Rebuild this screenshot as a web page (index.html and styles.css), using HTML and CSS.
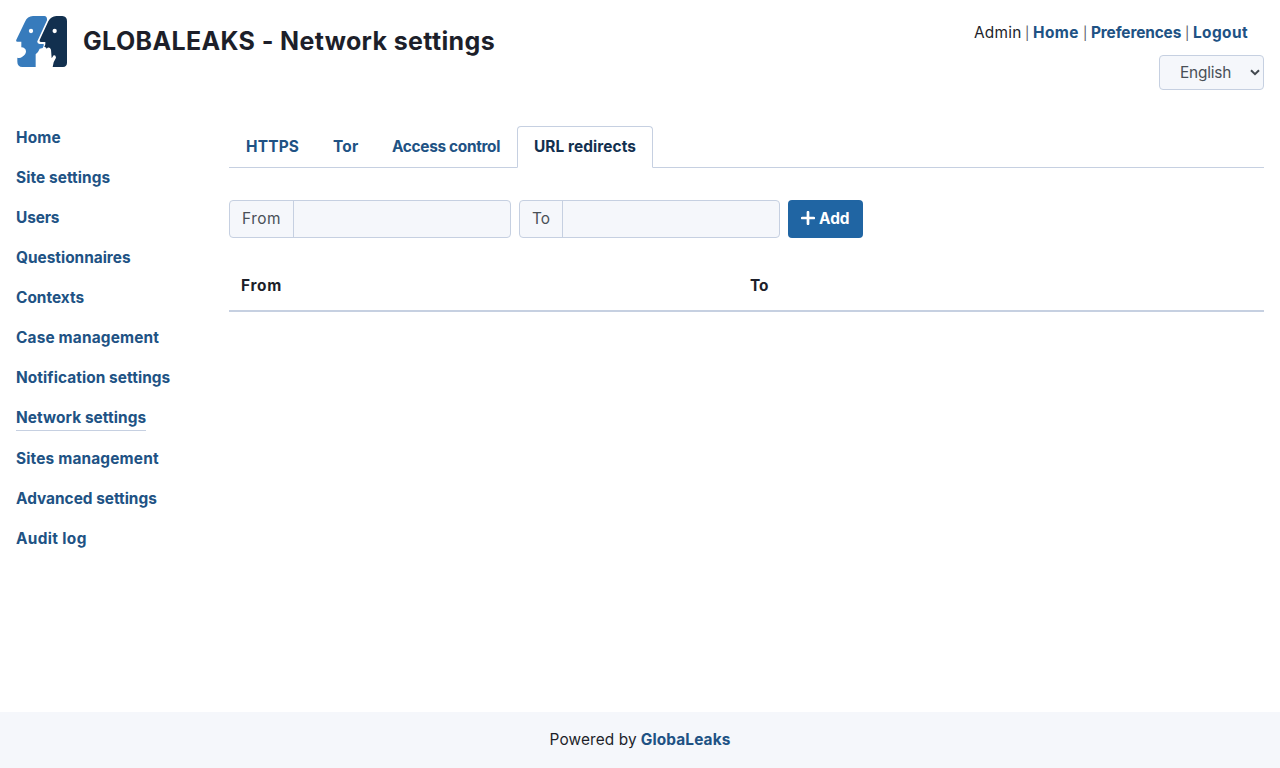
FILE: index.html
```html
<!DOCTYPE html>
<html lang="en">
<head>
<meta charset="utf-8">
<title>GLOBALEAKS - Network settings</title>
<link rel="stylesheet" href="styles.css">
</head>
<body>
<header class="header">
  <div class="brand">
    <svg class="logo" viewBox="24 24 153 153" aria-hidden="true">
      <path fill="#377bbc" d="M75 24H109Q118 25 117 37L88 100Q87 107 95 108H107V113L104 120L95 122L90 132L83 139V177H43Q28 176 28 161V149Q36 152 43 146Q54 140 54 130Q53 119 40 118V101H28Q23 101 25 95L51 41Q58 25 75 24Z"/>
      <path fill="#12304f" d="M145 24H163Q177 25 177 39V164Q177 176 165 177H134L137 163L144 149Q143 140 137 142L131 151L129 125Q126 117 119 119L116 122Q114 116 109 117L112 109V102H98Q93 101 95 96L121 40Q129 25 145 24Z"/>
      <circle cx="69" cy="69" r="6.5" fill="#fff"/>
      <circle cx="140" cy="69" r="6.5" fill="#fff"/>
    </svg>
    <h1 class="title">GLOBALEAKS - Network settings</h1>
  </div>
  <div class="account">
    <div class="user-links"><span class="u-name">Admin</span><i>|</i><a class="u-home">Home</a><i>|</i><a class="u-pref">Preferences</a><i>|</i><a class="u-out">Logout</a></div>
    <div class="language"><span>English</span><svg class="chevron" viewBox="0 0 10 7"><path d="M1 1.2L5 5.2L9 1.2"/></svg></div>
  </div>
</header>
<div class="layout">
  <nav class="sidebar">
    <a class="wide">Home</a>
    <a>Site settings</a>
    <a class="snug">Users</a>
    <a class="even">Questionnaires</a>
    <a class="even">Contexts</a>
    <a class="wide">Case management</a>
    <a>Notification settings</a>
    <a class="current">Network settings</a>
    <a class="wide">Sites management</a>
    <a class="even">Advanced settings</a>
    <a class="wider">Audit log</a>
  </nav>
  <main class="content">
    <div class="tabs">
      <a class="tab t-https">HTTPS</a>
      <a class="tab t-tor">Tor</a>
      <a class="tab t-access">Access control</a>
      <a class="tab active">URL redirects</a>
    </div>
    <form class="redirect-form">
      <label class="group from"><span>From</span><input type="text"></label>
      <label class="group to"><span>To</span><input type="text"></label>
      <button class="add" type="button"><svg class="plus" viewBox="0 0 14 14"><path d="M7 1.2V12.8M1.2 7H12.8"/></svg><span>Add</span></button>
    </form>
    <div class="table-head"><span>From</span><span>To</span></div>
  </main>
</div>
<footer class="footer"><span>Powered by</span><a>GlobaLeaks</a></footer>
</body>
</html>
```
FILE: styles.css
```css
* { box-sizing: border-box; }
body {
  margin: 0;
  height: 768px;
  display: flex;
  flex-direction: column;
  background: #fff;
  color: #1d1f2a;
  font: 400 15.4px/24px Inter, "Liberation Sans", sans-serif;
  white-space: nowrap;
}
a { color: #205284; font-weight: 700; }
.header { display: flex; justify-content: space-between; height: 126px; padding: 16px 16px 0; }
.brand { display: flex; gap: 16px; height: 51px; }
.logo { width: 51px; height: 51px; }
.title { margin: 0; font-size: 25px; line-height: 50px; font-weight: 650; letter-spacing: .36px; }
.account { display: flex; flex-direction: column; align-items: flex-end; }
.user-links { display: flex; height: 39px; padding: 5px 16px 0 0; }
.user-links i { width: 12px; padding-left: 4px; font-style: normal; font-size: 13px; color: #555763; }
.u-name { width: 47px; letter-spacing: .25px; }
.u-home { width: 46px; letter-spacing: .4px; }
.u-pref { width: 90px; letter-spacing: -.12px; }
.u-out { width: 55px; letter-spacing: .4px; }
.language {
  display: flex; align-items: center; justify-content: space-between;
  width: 105px; height: 35px; padding: 0 3px 0 20px;
  border: 1px solid #c6d0e1; border-radius: 4px;
  background: #f5f7fb; color: #495057; letter-spacing: -.2px;
}
.chevron { width: 10px; height: 7px; fill: none; stroke: #42484f; stroke-width: 2; }
.layout { flex: 1; display: flex; padding: 0 16px; }
.sidebar { display: flex; flex-direction: column; align-items: flex-start; gap: 16px; width: 213px; }
.sidebar a { height: 24px; letter-spacing: .08px; }
.sidebar .snug { letter-spacing: -.12px; }
.sidebar .even { letter-spacing: 0; }
.sidebar .wide { letter-spacing: .17px; }
.sidebar .wider { letter-spacing: .35px; }
.sidebar .current { width: 130px; height: 25px; border-bottom: 1px solid #c6d0e1; }
.content { flex: 1; }
.tabs { display: flex; height: 42px; border-bottom: 1px solid #c6d0e1; }
.tab { height: 42px; padding: 9px 0 0 17px; }
.t-https { width: 87px; letter-spacing: .2px; }
.t-tor { width: 59px; letter-spacing: .2px; }
.t-access { width: 142px; letter-spacing: -.32px; }
.active {
  width: 136px; padding: 8px 0 0 16px; letter-spacing: .08px;
  border: 1px solid #c6d0e1; border-bottom-color: #fff;
  border-radius: 4px 4px 0 0; background: #fff; color: #12304f;
}
.redirect-form { display: flex; gap: 8px; margin: 32px 0 0; }
.group {
  display: flex; height: 38px; overflow: hidden;
  border: 1px solid #c6d0e1; border-radius: 4px;
  background: #f5f7fb; color: #495057;
}
.group span { padding: 6px 0 0 12px; border-right: 1px solid #c6d0e1; }
.group input { flex: 1; min-width: 0; border: 0; background: transparent; }
.from { width: 282px; }
.from span { width: 64px; letter-spacing: .5px; }
.to { width: 261px; }
.to span { width: 43px; }
.add {
  display: flex; align-items: center; gap: 4px;
  width: 75px; height: 38px; padding: 0 0 0 13px;
  border: 0; border-radius: 4px; background: #2065a3; color: #fff;
  font: 700 15.4px/24px Inter, sans-serif;
}
.plus { width: 14px; height: 14px; margin-top: -2px; fill: none; stroke: #fff; stroke-width: 2.7; stroke-linecap: round; }
.table-head {
  display: flex; height: 50px; margin-top: 24px; padding: 12px 0 0 12px;
  border-bottom: 2px solid #c6d0e1; font-weight: 700;
}
.table-head span:first-child { width: 509px; letter-spacing: .75px; }
.footer { display: flex; justify-content: center; gap: 4px; height: 56px; padding-top: 16px; background: #f5f7fb; letter-spacing: .12px; }
```
